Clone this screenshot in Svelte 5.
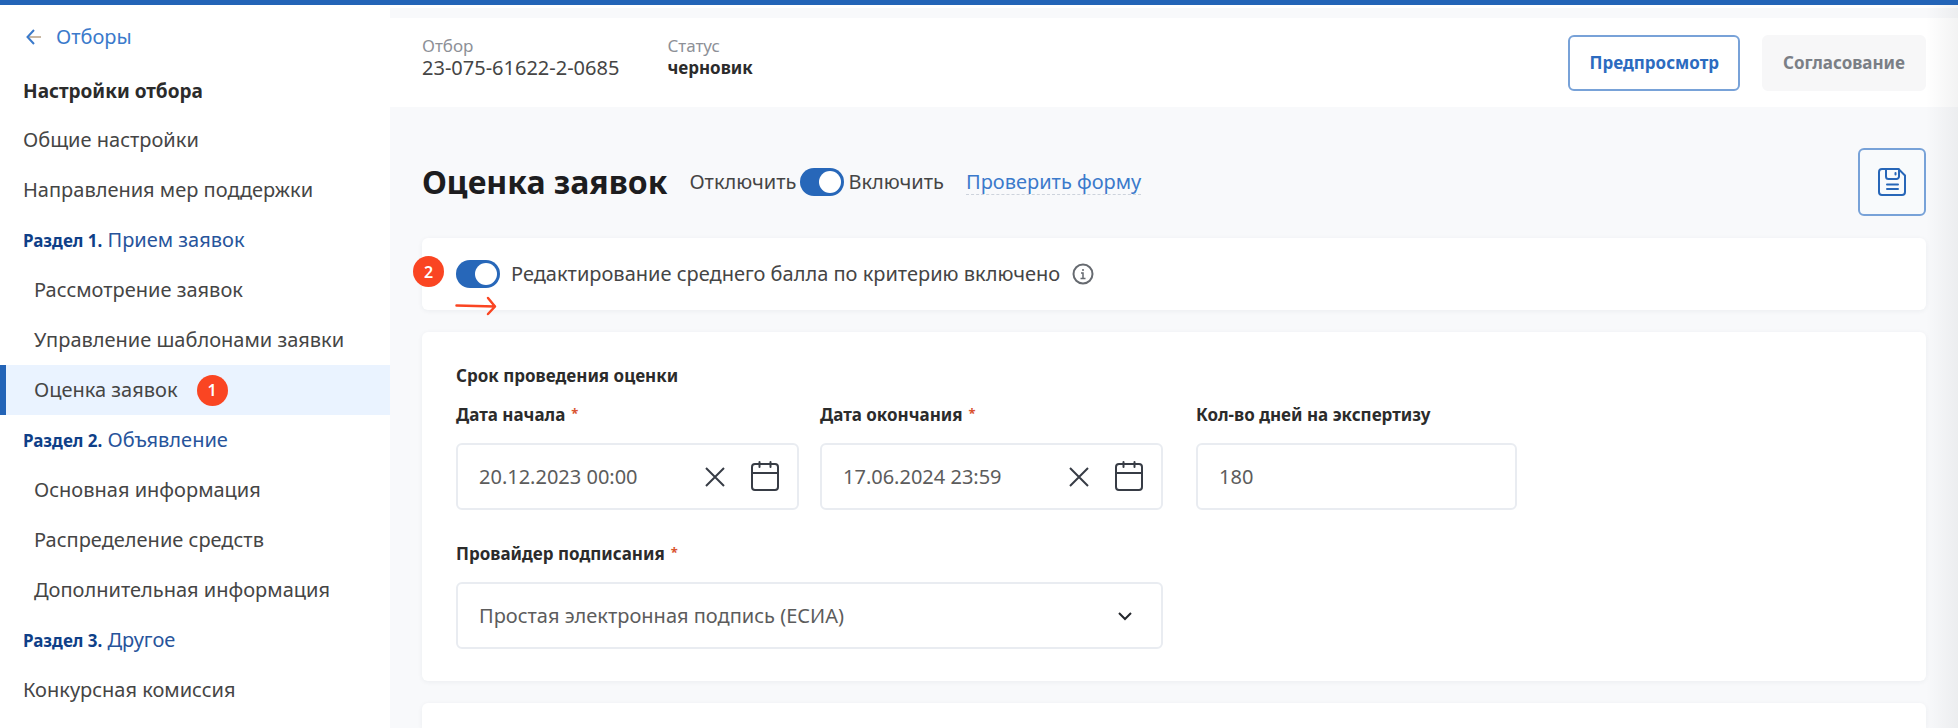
<script>
  const menu = [
    { label: 'Общие настройки' },
    { label: 'Направления мер поддержки' },
    { section: 'Раздел 1.', label: 'Прием заявок' },
    { label: 'Рассмотрение заявок', nested: true },
    { label: 'Управление шаблонами заявки', nested: true },
    { label: 'Оценка заявок', nested: true, active: true, badge: 1 },
    { section: 'Раздел 2.', label: 'Объявление' },
    { label: 'Основная информация', nested: true },
    { label: 'Распределение средств', nested: true },
    { label: 'Дополнительная информация', nested: true },
    { section: 'Раздел 3.', label: 'Другое' },
    { label: 'Конкурсная комиссия' }
  ];

  let dates = $state([
    { id: 'start', label: 'Дата начала', value: '20.12.2023 00:00' },
    { id: 'end', label: 'Дата окончания', value: '17.06.2024 23:59' }
  ]);
  let days = $state('180');
  let enabled = $state(true);
  let editing = $state(true);
</script>

<div class="page">
  <nav class="sidebar">
    <a class="back" href="#list">
      <svg width="16" height="16" viewBox="0 0 16 16" fill="none" stroke-width="2">
        <path d="M3 8H15" stroke="#c9b8a4" />
        <path d="M8 1L1.500 8L8 15" stroke="#3b7acb" />
      </svg>
      Отборы
    </a>
    <h2>Настройки отбора</h2>
    <ul>
      {#each menu as item}
        <li class:active={item.active}>
          <a href="#menu" class:nested={item.nested} class:section={item.section}>
            <span>{#if item.section}<b>{item.section}</b>{' '}{/if}{item.label}</span>
            {#if item.badge}<span class="badge">{item.badge}</span>{/if}
          </a>
        </li>
      {/each}
    </ul>
  </nav>

  <main>
    <header>
      <dl>
        <div><dt>Отбор</dt><dd>23-075-61622-2-0685</dd></div>
        <div><dt>Статус</dt><dd class="status">черновик</dd></div>
      </dl>
      <div class="actions">
        <button class="outline">Предпросмотр</button>
        <button class="muted" disabled>Согласование</button>
      </div>
    </header>

    <div class="content">
      <div class="title">
        <h1>Оценка заявок</h1>
        <label class="switch">
          Отключить <input type="checkbox" class="toggle" bind:checked={enabled} /> Включить
        </label>
        <a class="check" href="#check">Проверить форму</a>
        <button class="save" aria-label="Сохранить">
          <svg width="28" height="28" viewBox="0 0 28 28" fill="none" stroke="#2766b8" stroke-width="2" stroke-linejoin="round" stroke-linecap="round">
            <path d="M4 1H20.500L27 7.500V24A3 3 0 0 1 24 27H4A3 3 0 0 1 1 24V4A3 3 0 0 1 4 1Z" />
            <path d="M8 1V8.500A2.500 2.500 0 0 0 10.500 11H18.500A2.500 2.500 0 0 0 21 8.500V1.500M17.500 5V6.500M9 16.500H20M9 21H20" />
          </svg>
        </button>
      </div>

      <section class="card edit">
        <span class="badge step">2</span>
        <label class="editing">
          <input type="checkbox" class="toggle" bind:checked={editing} />
          Редактирование среднего балла по критерию включено
        </label>
        <svg width="22" height="22" viewBox="0 0 22 22" fill="none" stroke="#666a70" stroke-width="2">
          <circle cx="11" cy="11" r="9.500" />
          <path d="M11 6V8M9 10H11V15M8.500 15.500H13.500" stroke-width="1.500" />
        </svg>
        <svg class="pointer" width="42" height="20" viewBox="0 0 42 20" fill="none" stroke="#fa4522" stroke-width="2.500" stroke-linecap="round" stroke-linejoin="round">
          <path d="M1.500 9.500L40 10.500M33 2L40 10.500L33 18" />
        </svg>
      </section>

      <section class="card form">
        <h3>Срок проведения оценки</h3>
        <div class="fields">
          {#each dates as date}
            <div class="field">
              <label for={date.id}>{date.label} <i>*</i></label>
              <div class="control">
                <input type="text" id={date.id} bind:value={date.value} />
                <button aria-label="Очистить" onclick={() => (date.value = '')}>
                  <svg width="20" height="20" viewBox="0 0 20 20" fill="none" stroke="#373c45" stroke-width="2">
                    <path d="M1 1L19 19M19 1L1 19" />
                  </svg>
                </button>
                <button aria-label="Открыть календарь">
                  <svg width="30" height="32" viewBox="0 0 30 32" fill="none" stroke="#373c45" stroke-width="2" stroke-linecap="round">
                    <rect x="2" y="3" width="26" height="26" rx="3" />
                    <path d="M2 12H28M9.500 1V6M20.500 1V6" />
                  </svg>
                </button>
              </div>
            </div>
          {/each}
          <div class="field days">
            <label for="days">Кол-во дней на экспертизу</label>
            <div class="control"><input type="text" id="days" bind:value={days} /></div>
          </div>
          <div class="field provider">
            <label for="provider">Провайдер подписания <i>*</i></label>
            <div class="control">
              <select id="provider">
                <option>Простая электронная подпись (ЕСИА)</option>
              </select>
              <svg class="chevron" width="16" height="12" viewBox="0 0 16 12" fill="none" stroke="#24272c" stroke-width="2">
                <path d="M2 3L8 9L14 3" />
              </svg>
            </div>
          </div>
        </div>
      </section>

      <section class="card rest"></section>
    </div>
  </main>
</div>

<style>
  :global(body) {
    margin: 0;
  }

  .page,
  .page * {
    box-sizing: border-box;
  }

  .page {
    position: relative;
    display: grid;
    grid-template-columns: 390px 1fr;
    min-height: 100vh;
    border-top: 5px solid #2364b7;
    background: #fff;
    color: #454545;
    font: 20px/24px 'Noto Sans', sans-serif;
  }

  /* Soft shade along the right edge of the window */
  .page::after {
    content: '';
    position: absolute;
    inset: 0 0 0 auto;
    width: 32px;
    background: linear-gradient(to right, transparent, rgba(40, 45, 50, 0.06));
    pointer-events: none;
  }

  a {
    color: inherit;
    text-decoration: none;
  }

  button,
  input,
  select {
    margin: 0;
    font: inherit;
    color: inherit;
  }

  h1,
  h2,
  h3,
  ul,
  dl,
  dd {
    margin: 0;
    padding: 0;
  }

  .back {
    display: flex;
    align-items: center;
    gap: 14px;
    padding: 20px 26px;
    color: #3b7acb;
  }

  h2 {
    padding: 10px 23px 12px;
    color: #2b2b2b;
    font-size: 19px;
    line-height: 24px;
  }

  ul {
    list-style: none;
  }

  li a {
    display: flex;
    align-items: center;
    gap: 19px;
    height: 50px;
    padding: 0 23px;
  }

  li a.nested {
    padding-left: 34px;
  }

  li a.section {
    color: #27549b;
  }

  li b {
    color: #0f3f88;
    font-size: 17px;
  }

  li.active {
    background: #eaf3ff;
    box-shadow: inset 6px 0 #2364b7;
  }

  .badge {
    display: grid;
    place-items: center;
    width: 31px;
    height: 31px;
    border-radius: 50%;
    background: #fa4522;
    color: #fff;
    font-size: 16px;
    font-weight: 600;
  }

  main {
    display: flex;
    flex-direction: column;
    padding-top: 13px;
    background: linear-gradient(#fff 3px, #f8f9fb 3px);
  }

  header {
    display: flex;
    justify-content: space-between;
    align-items: center;
    height: 89px;
    padding: 0 32px;
    background: #fff;
  }

  dl {
    display: flex;
    gap: 48px;
    margin-bottom: 12px;
  }

  dt {
    color: #8d9097;
    font-size: 17px;
    line-height: 22px;
  }

  dd {
    line-height: 22px;
  }

  .status {
    color: #2b2b2b;
    font-size: 17px;
    font-weight: 700;
  }

  .actions {
    display: flex;
    gap: 22px;
  }

  .actions button {
    height: 56px;
    padding: 0 19px;
    border: 2px solid #78a2d8;
    border-radius: 6px;
    background: #fff;
    color: #2c6bc0;
    font-size: 17px;
    font-weight: 700;
  }

  .actions .muted {
    border-color: #f7f7f8;
    background: #f7f7f8;
    color: #7b7f86;
  }

  .content {
    display: flex;
    flex: 1;
    flex-direction: column;
    gap: 22px;
    padding: 41px 32px 0;
  }

  .title {
    display: flex;
    align-items: center;
    gap: 22px;
  }

  h1 {
    color: #1d1d1f;
    font-size: 32px;
    line-height: 40px;
  }

  .switch {
    display: flex;
    align-items: center;
    gap: 4px;
  }

  .toggle {
    appearance: none;
    flex: none;
    width: 44px;
    height: 28px;
    padding: 3px;
    border-radius: 14px;
    background: #b5bcc6;
  }

  .toggle::after {
    content: '';
    display: block;
    width: 22px;
    height: 22px;
    border-radius: 50%;
    background: #fff;
  }

  .toggle:checked {
    background: #2767b9;
  }

  .toggle:checked::after {
    margin-left: auto;
  }

  .check {
    border-bottom: 1px dashed #cdd3dc;
    color: #3b7acb;
  }

  .save {
    display: grid;
    place-items: center;
    width: 68px;
    height: 68px;
    margin-left: auto;
    padding: 0;
    border: 2px solid #78a2d8;
    border-radius: 6px;
    background: #f8fafc;
  }

  .card {
    border-radius: 6px;
    background: #fff;
    box-shadow: 0 1px 5px rgba(40, 50, 70, 0.06);
  }

  .edit {
    position: relative;
    display: flex;
    align-items: center;
    gap: 12px;
    height: 72px;
    padding: 0 34px;
  }

  .editing {
    display: flex;
    align-items: center;
    gap: 11px;
  }

  .step {
    position: absolute;
    left: -9px;
    top: 18px;
  }

  .pointer {
    position: absolute;
    left: 33px;
    bottom: -6px;
  }

  .form {
    padding: 32px 34px;
  }

  h3,
  .field label {
    color: #2b2b2b;
    font-size: 17px;
    font-weight: 700;
    line-height: 24px;
  }

  .fields {
    display: grid;
    grid-template-columns: 343px 343px 321px;
    gap: 32px 21px;
    padding-top: 15px;
  }

  .days {
    margin-left: 12px;
    margin-right: -12px;
  }

  .provider {
    grid-column: span 2;
  }

  .field {
    display: flex;
    flex-direction: column;
    gap: 16px;
  }

  .field label {
    display: flex;
    gap: 6px;
  }

  i {
    color: #d9532f;
    font-size: 13px;
    font-style: normal;
    line-height: 20px;
  }

  .control {
    position: relative;
    display: flex;
    align-items: center;
    gap: 25px;
    height: 67px;
    padding: 0 17px 0 0;
    border: 2px solid #e9ecf1;
    border-radius: 6px;
    color: #5c5c5c;
  }

  .control input,
  .control select {
    flex: 1;
    min-width: 0;
    height: 100%;
    padding: 0 0 0 21px;
    border: 0;
    background: none;
    appearance: none;
  }

  .control button {
    display: grid;
    padding: 0;
    border: 0;
    background: none;
  }

  .chevron {
    position: absolute;
    right: 28px;
    pointer-events: none;
  }

  .rest {
    flex: 1;
    border-radius: 6px 6px 0 0;
  }
</style>
